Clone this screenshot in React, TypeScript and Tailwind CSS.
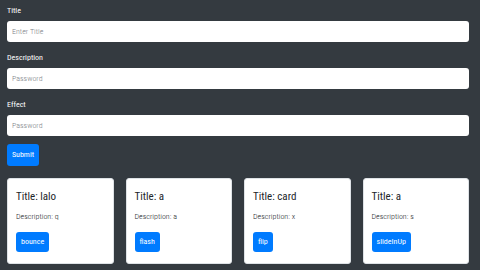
import { useState } from 'react';

const cards = [
  { title: 'lalo', description: 'q', effect: 'bounce' },
  { title: 'a', description: 'a', effect: 'flash' },
  { title: 'card', description: 'x', effect: 'flip' },
  { title: 'a', description: 's', effect: 'slideInUp' },
];

export default function App() {
  const [title, setTitle] = useState('');
  const [description, setDescription] = useState('');
  const [effect, setEffect] = useState('');

  const inputCls =
    'block w-full h-[21px] rounded-[3px] bg-white px-[5px] text-[8px] font-light text-[#495057] placeholder:text-[#7d8287] outline-none';
  const labelCls = 'block text-[8px] leading-[12px] text-white mb-[4px]';

  return (
    <div
      className="min-h-[270px] w-[480px] bg-[#343a40] pl-[7px] pr-[11px] pt-[5px]"
      style={{ fontFamily: '"Roboto Condensed", Roboto, "Liberation Sans", sans-serif' }}
    >
      <form onSubmit={(e) => e.preventDefault()}>
        <label className={labelCls}>Title</label>
        <input
          value={title}
          onChange={(e) => setTitle(e.target.value)}
          placeholder="Enter Title"
          className={inputCls + ' mb-[10px]'}
        />
        <label className={labelCls}>Description</label>
        <input
          value={description}
          onChange={(e) => setDescription(e.target.value)}
          placeholder="Password"
          className={inputCls + ' mb-[10px]'}
        />
        <label className={labelCls}>Effect</label>
        <input
          value={effect}
          onChange={(e) => setEffect(e.target.value)}
          placeholder="Password"
          className={inputCls}
        />
        <button
          type="submit"
          className="mt-[8px] h-[22px] w-[32px] rounded-[3px] bg-[#007bff] text-[8px] text-white"
        >
          Submit
        </button>
      </form>

      <div className="mt-[12px] grid grid-cols-4 gap-[12px]">
        {cards.map((c, i) => (
          <div key={i} className="h-[86px] rounded-[3px] border border-[#dee2e6] bg-white px-[8px] pt-[11px]">
            <div className="text-[11px] leading-[14px] text-[#212529]">Title: {c.title}</div>
            <div className="mt-[7px] text-[8px] font-light leading-[12px] text-[#212529]">Description: {c.description}</div>
            <button className="mt-[9px] h-[20px] rounded-[3px] bg-[#007bff] px-[5px] text-[8px] text-white">
              {c.effect}
            </button>
          </div>
        ))}
      </div>
    </div>
  );
}
